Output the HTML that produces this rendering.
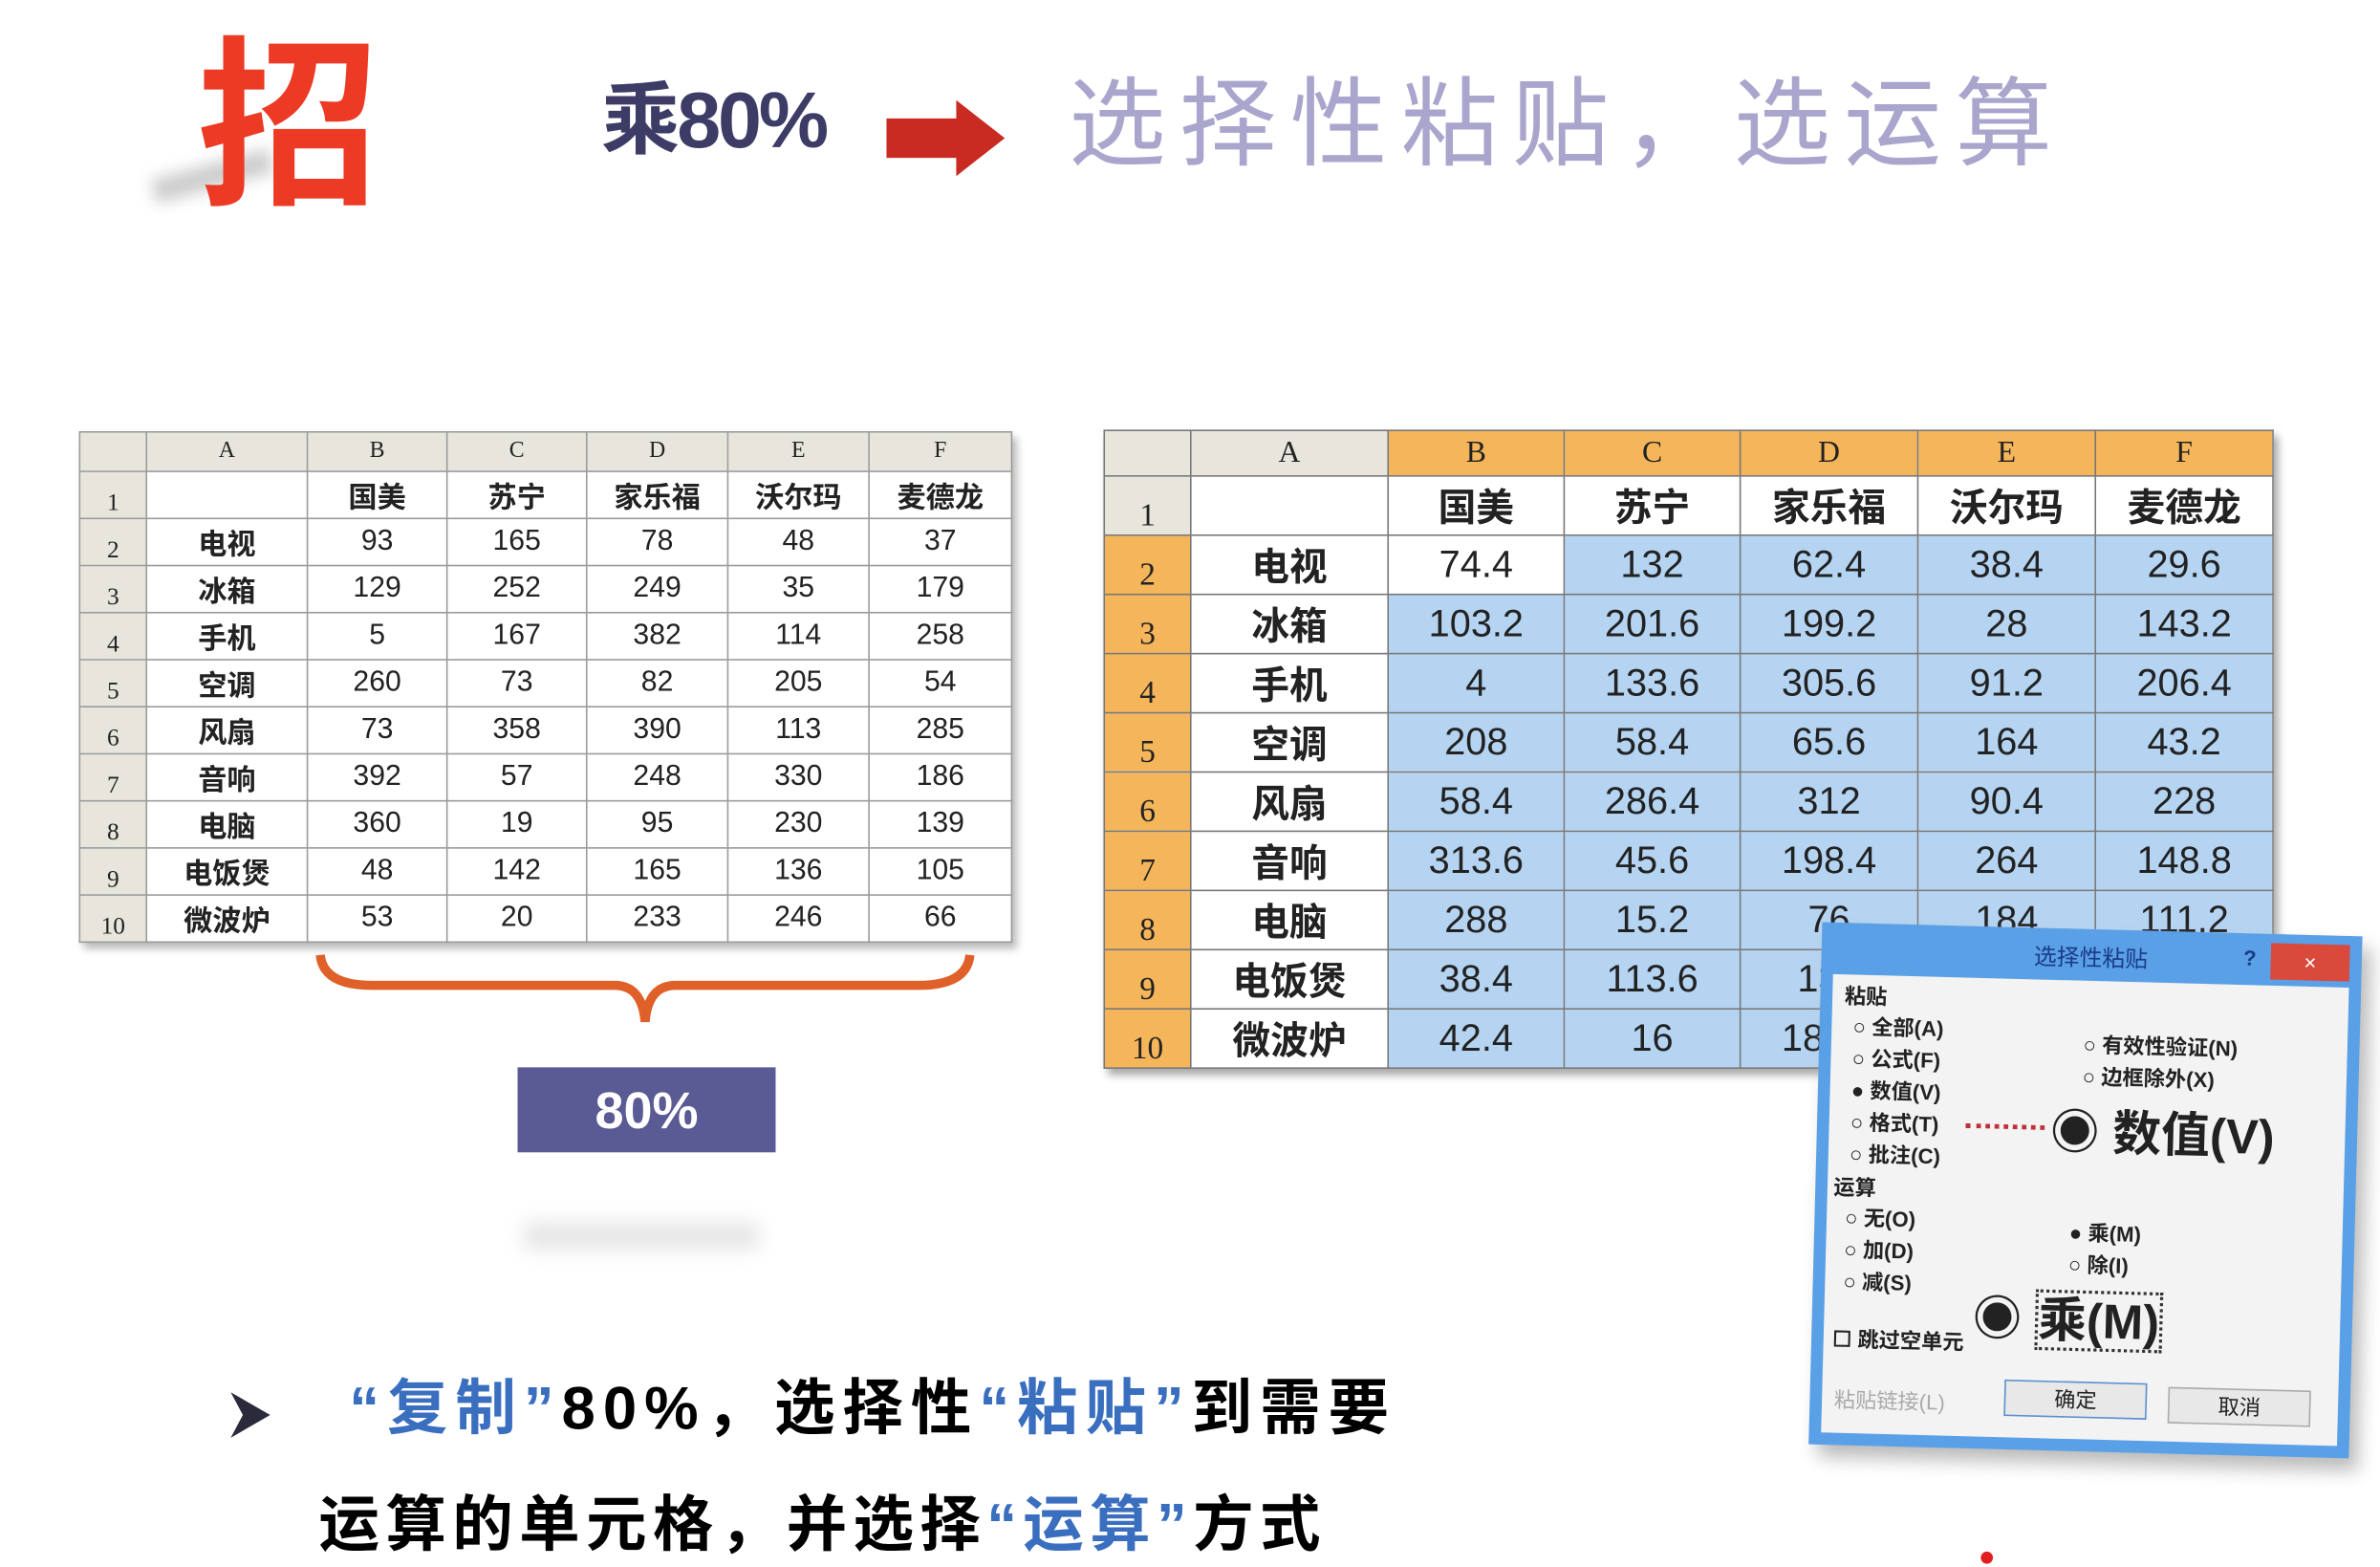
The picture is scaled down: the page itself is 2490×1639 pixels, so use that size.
<!DOCTYPE html>
<html><head><meta charset="utf-8">
<style>
html,body{margin:0;padding:0;background:#fff;overflow:hidden}
#w{position:absolute;left:0;top:0;width:1568px;height:1032px;transform:scale(1.588);transform-origin:0 0;font-family:"Liberation Sans","Noto Sans CJK SC",sans-serif}
.a{position:absolute}
table{border-collapse:collapse;table-layout:fixed;position:absolute}
td{padding:0;text-align:center;border:1px solid #9a9a9a;overflow:hidden;white-space:nowrap}
#t1 td{font-size:19px;color:#222;height:30px}
#t1 tr.h td{background:#e8e6dc;height:25px;font-size:15px;font-family:"Liberation Serif",serif}
#t1 td.r{background:#e8e6dc;font-size:16px;font-family:"Liberation Serif",serif;vertical-align:bottom}
#t1 td.n{font-weight:bold}
#t2 td{font-size:25px;color:#222;height:38px;border-color:#777}
#t2 tr.h td{background:#f5b55a;height:29px;font-size:20px;font-family:"Liberation Serif",serif}
#t2 tr.h td.g{background:#e8e6dc}
#t2 td.r{background:#f5b55a;font-size:21px;font-family:"Liberation Serif",serif;vertical-align:bottom}
#t2 td.r1{background:#e8e6dc}
#t2 td.b{background:#b5d4f2}
#t2 td.n{font-weight:bold}
.q{color:#3a6fc0}
</style></head><body><div id="w">
<div class="a" style="left:100px;top:108px;width:80px;height:16px;background:#ccc;filter:blur(5px);transform:rotate(-15deg)"></div>
<div class="a" style="left:130px;top:24px;font-size:120px;font-weight:bold;color:#ec3a24;line-height:1">招</div>
<div class="a" style="left:396px;top:54px;font-size:52px;font-weight:bold;color:#3c3c66;line-height:1;letter-spacing:-2px">乘80%</div>
<svg class="a" style="left:584px;top:66px" width="80" height="50"><path d="M0 12H46V0L78 25L46 50V38H0Z" fill="#c92a22"/></svg>
<div class="a" style="left:704px;top:50px;font-size:64px;color:#a9a5cc;line-height:1;letter-spacing:9px">选择性粘贴，选运算</div>

<table id="t1" style="left:52px;top:284px;width:614px;box-shadow:3px 4px 5px #bbb">
<colgroup><col style="width:44px"><col style="width:106px"><col style="width:92px"><col style="width:92px"><col style="width:93px"><col style="width:93px"><col style="width:94px"></colgroup>
<tr class="h"><td></td><td>A</td><td>B</td><td>C</td><td>D</td><td>E</td><td>F</td></tr>
<tr><td class="r">1</td><td></td><td class="n">国美</td><td class="n">苏宁</td><td class="n">家乐福</td><td class="n">沃尔玛</td><td class="n">麦德龙</td></tr>
<tr><td class="r">2</td><td class="n">电视</td><td>93</td><td>165</td><td>78</td><td>48</td><td>37</td></tr>
<tr><td class="r">3</td><td class="n">冰箱</td><td>129</td><td>252</td><td>249</td><td>35</td><td>179</td></tr>
<tr><td class="r">4</td><td class="n">手机</td><td>5</td><td>167</td><td>382</td><td>114</td><td>258</td></tr>
<tr><td class="r">5</td><td class="n">空调</td><td>260</td><td>73</td><td>82</td><td>205</td><td>54</td></tr>
<tr><td class="r">6</td><td class="n">风扇</td><td>73</td><td>358</td><td>390</td><td>113</td><td>285</td></tr>
<tr><td class="r">7</td><td class="n">音响</td><td>392</td><td>57</td><td>248</td><td>330</td><td>186</td></tr>
<tr><td class="r">8</td><td class="n">电脑</td><td>360</td><td>19</td><td>95</td><td>230</td><td>139</td></tr>
<tr><td class="r">9</td><td class="n">电饭煲</td><td>48</td><td>142</td><td>165</td><td>136</td><td>105</td></tr>
<tr><td class="r">10</td><td class="n">微波炉</td><td>53</td><td>20</td><td>233</td><td>246</td><td>66</td></tr>
</table>

<svg class="a" style="left:205px;top:625px" width="440" height="55"><path d="M6 4 Q8 24 40 24 H200 Q218 24 220 48 Q222 24 240 24 H400 Q432 24 434 4" fill="none" stroke="#e0602a" stroke-width="6"/></svg>
<div class="a" style="left:341px;top:703px;width:170px;height:56px;background:#5a5a94;color:#fff;font-size:34px;font-weight:bold;text-align:center;line-height:58px">80%</div>
<div class="a" style="left:345px;top:805px;width:155px;height:18px;background:#e6e6e6;filter:blur(6px)"></div>

<table id="t2" style="left:727px;top:283px;width:770px;box-shadow:3px 4px 5px #aaa">
<colgroup><col style="width:57px"><col style="width:130px"><col style="width:116px"><col style="width:116px"><col style="width:117px"><col style="width:117px"><col style="width:117px"></colgroup>
<tr class="h"><td class="g"></td><td class="g">A</td><td>B</td><td>C</td><td>D</td><td>E</td><td>F</td></tr>
<tr><td class="r r1">1</td><td></td><td class="n">国美</td><td class="n">苏宁</td><td class="n">家乐福</td><td class="n">沃尔玛</td><td class="n">麦德龙</td></tr>
<tr><td class="r">2</td><td class="n">电视</td><td>74.4</td><td class="b">132</td><td class="b">62.4</td><td class="b">38.4</td><td class="b">29.6</td></tr>
<tr><td class="r">3</td><td class="n">冰箱</td><td class="b">103.2</td><td class="b">201.6</td><td class="b">199.2</td><td class="b">28</td><td class="b">143.2</td></tr>
<tr><td class="r">4</td><td class="n">手机</td><td class="b">4</td><td class="b">133.6</td><td class="b">305.6</td><td class="b">91.2</td><td class="b">206.4</td></tr>
<tr><td class="r">5</td><td class="n">空调</td><td class="b">208</td><td class="b">58.4</td><td class="b">65.6</td><td class="b">164</td><td class="b">43.2</td></tr>
<tr><td class="r">6</td><td class="n">风扇</td><td class="b">58.4</td><td class="b">286.4</td><td class="b">312</td><td class="b">90.4</td><td class="b">228</td></tr>
<tr><td class="r">7</td><td class="n">音响</td><td class="b">313.6</td><td class="b">45.6</td><td class="b">198.4</td><td class="b">264</td><td class="b">148.8</td></tr>
<tr><td class="r">8</td><td class="n">电脑</td><td class="b">288</td><td class="b">15.2</td><td class="b">76</td><td class="b">184</td><td class="b">111.2</td></tr>
<tr><td class="r">9</td><td class="n">电饭煲</td><td class="b">38.4</td><td class="b">113.6</td><td class="b">132</td><td class="b">110.4</td><td class="b">84</td></tr>
<tr><td class="r">10</td><td class="n">微波炉</td><td class="b">42.4</td><td class="b">16</td><td class="b">186.4</td><td class="b">196.8</td><td class="b">52.8</td></tr>
</table>

<div class="a" style="left:1196px;top:612px;width:356px;height:344px;background:#5aa0e6;transform:rotate(1.5deg);box-shadow:6px 8px 12px #bbb;font-size:14px;color:#222">
 <div class="a" style="left:140px;top:8px;color:#1a3b8a;font-size:15px">选择性粘贴</div>
 <div class="a" style="left:278px;top:8px;color:#1a3b8a;font-weight:bold">?</div>
 <div class="a" style="left:296px;top:6px;width:52px;height:24px;background:#d94a3d;color:#fff;text-align:center;line-height:24px">×</div>
 <div class="a" style="left:8px;top:34px;width:340px;height:302px;background:#f3f3f3">
  <div class="a" style="left:8px;top:4px;font-weight:bold">粘贴</div>
  <div class="a" style="left:14px;top:24px;line-height:21px;font-weight:bold">○ 全部(A)<br>○ 公式(F)<br>● 数值(V)<br>○ 格式(T)<br>○ 批注(C)</div>
  <div class="a" style="left:166px;top:32px;line-height:21px;font-weight:bold">○ 有效性验证(N)<br>○ 边框除外(X)</div>
  <div class="a" style="left:146px;top:84px;font-size:32px;font-weight:bold;line-height:1">◉ 数值(V)</div>
  <div class="a" style="left:90px;top:96px;width:52px;border-top:3px dotted #c0303a"></div>
  <div class="a" style="left:4px;top:130px;font-weight:bold">运算</div>
  <div class="a" style="left:12px;top:150px;line-height:21px;font-weight:bold">○ 无(O)<br>○ 加(D)<br>○ 减(S)</div>
  <div class="a" style="left:160px;top:156px;line-height:21px;font-weight:bold">● 乘(M)<br>○ 除(I)</div>
  <div class="a" style="left:98px;top:208px;font-size:32px;font-weight:bold;line-height:1">◉ <span style="border:2px dotted #333">乘(M)</span></div>
  <div class="a" style="left:6px;top:230px;font-weight:bold">☐ 跳过空单元</div>
  <div class="a" style="left:8px;top:270px;color:#aaa">粘贴链接(L)</div>
  <div class="a" style="left:120px;top:264px;width:92px;height:22px;border:1px solid #5a8fd0;background:#e8e8e8;text-align:center;line-height:22px">确定</div>
  <div class="a" style="left:228px;top:266px;width:92px;height:22px;border:1px solid #aaa;background:#e8e8e8;text-align:center;line-height:22px">取消</div>
 </div>
</div>

<svg class="a" style="left:150px;top:915px" width="30" height="34"><path d="M2 2 L28 17 L2 32 L10 17Z" fill="#2a2a3a"/></svg>
<div class="a" style="left:230px;top:908px;font-size:40px;font-weight:bold;line-height:1;white-space:nowrap;letter-spacing:5px"><span class="q">“复制”</span>80%，选择性<span class="q">“粘贴”</span>到需要</div>
<div class="a" style="left:210px;top:985px;font-size:40px;font-weight:bold;line-height:1;white-space:nowrap;letter-spacing:4px">运算的单元格，并选择<span class="q">“运算”</span>方式</div>
<div class="a" style="left:1305px;top:1022px;width:8px;height:8px;border-radius:50%;background:#e02020"></div>
</div></body></html>
